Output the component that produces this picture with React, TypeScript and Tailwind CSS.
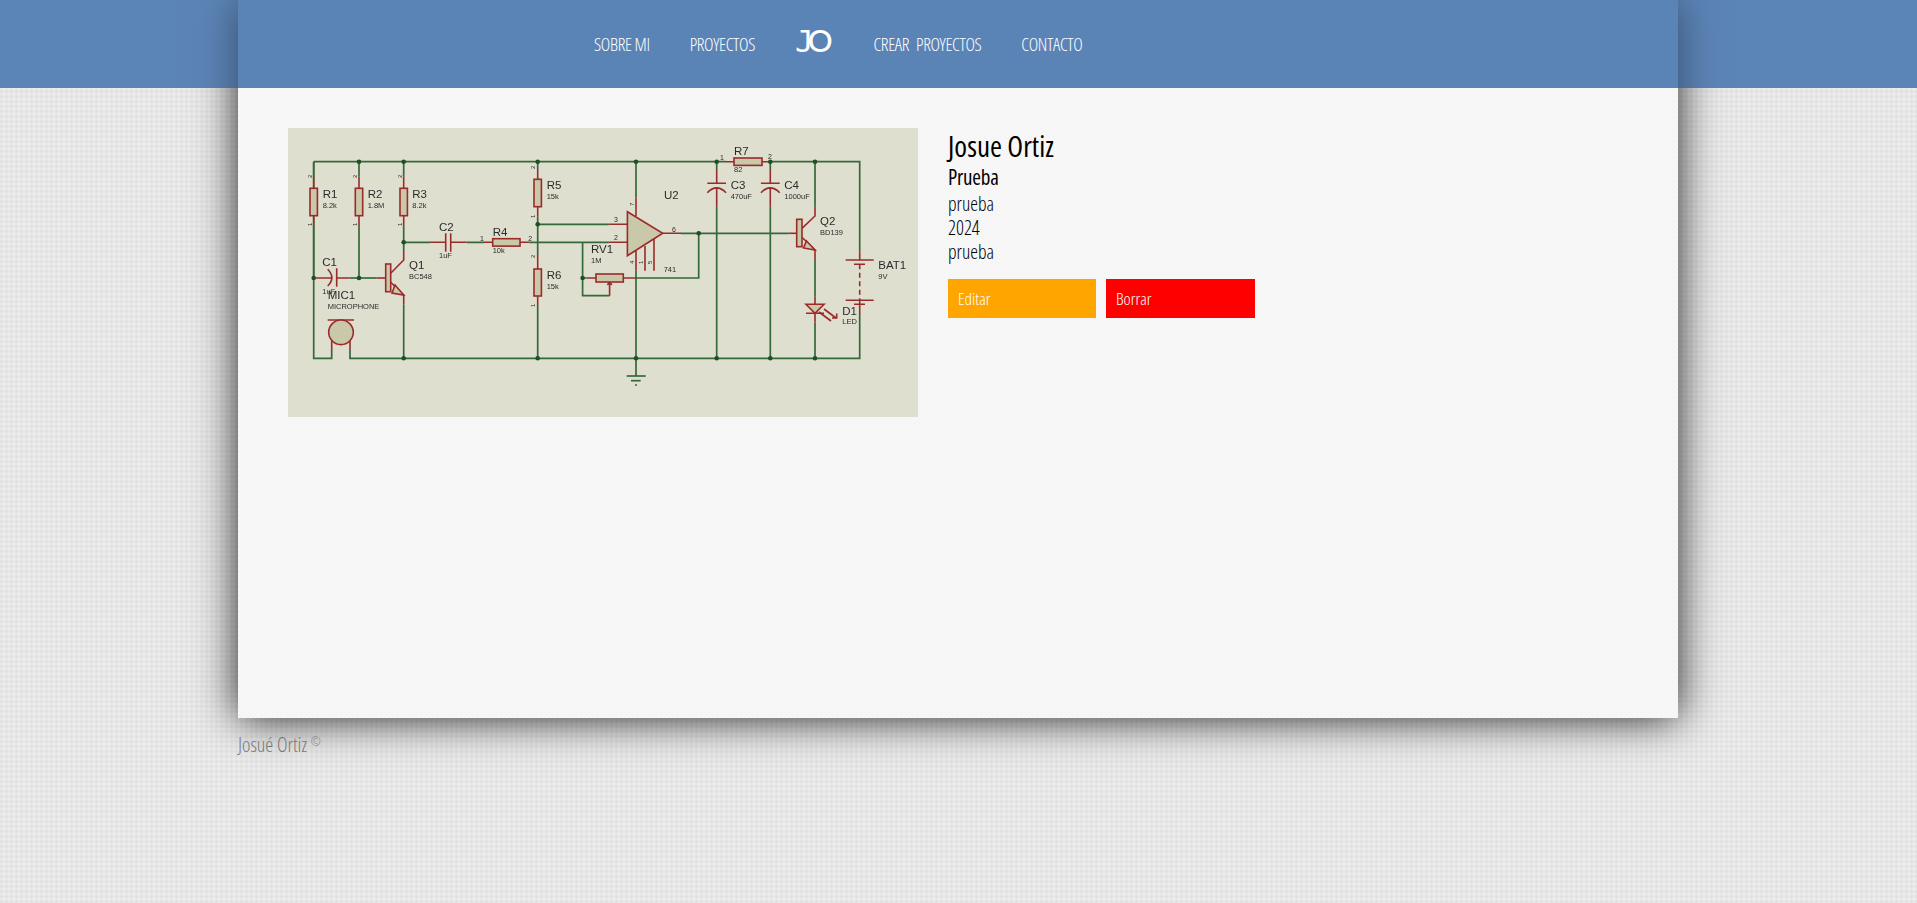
const WIRE = "#35693a";
const PART = "#9a2b2b";
const BODY = "#c9c8a8";

// green wires, each as a path
const wires = [
  "M25.7 33.7H438M482.3 33.7H571.7V123.7",
  "M25.7 33.7V230.3H43.7V222M62 222V230.3H571.7V186",
  "M25.7 33.7V48.7M25.7 97V150",
  "M71 33.7V48.7M71 97V150",
  "M115.7 33.7V48.7M115.7 97V123",
  "M115.7 176.3V230.3",
  "M115.7 114.3H142M178.7 114.3H196M241.3 114.3H320.8",
  "M249.7 33.7V42M249.7 88.7V127M249.7 178V230.3",
  "M249.7 96.3H320.8",
  "M348 33.7V69.3M348 142.7V248",
  "M393 105.3H500.3",
  "M410.7 105.3V150H348",
  "M294.6 114.3V167.7H321.6M294.6 150H298.8",
  "M428.7 33.7V42M428.7 78.7V230.3",
  "M482.3 33.7V42M482.3 78.7V230.3",
  "M527 33.7V78.7M527 132V168.7M527 194.7V230.3",
  "M61.3 150H88.7",
];

// red leads and component symbols
const leads = [
  "M28 150H44M48.7 150H61.3",
  "M88.7 150H97.7",
  "M102.7 145.3L115.7 132V123M102.7 154.3L115.7 167V176.3",
  "M142 114.3H157.7M162.7 114.3H178.7M157.7 105.3V123.7M162.7 105.3V123.7",
  "M196 114.3H204.7M232 114.3H241.3",
  "M320.8 96.3H339.4M320.8 114.3H339.4M374.7 105.3H393",
  "M348 69.3V88M348 123V142.7M357 118V142.7M366 111V142.7",
  "M298.8 150H308M335.3 150H348M321.6 167.7V154M319.4 157L321.6 154L323.8 157",
  "M428.7 42V55.3M419.3 55.3H438M419.3 64.7Q428.7 55 438 64.7M428.7 60V78.7",
  "M482.3 42V55.3M472.9 55.3H491.7M472.9 64.7Q482.3 55 491.7 64.7M482.3 60V78.7",
  "M438 33.7H446M474 33.7H482.3",
  "M500.3 105.3H508.7",
  "M514 100.3L527 88V78.7M514 109.3L527 122V132",
  "M527 168.7V176.3M518 185.3H536M527 185.3V194.7",
  "M536 181L548 190M544 190H548.7V185.5M531 184L543 193",
  "M571.7 123.7V132M557.7 132H585.7M566 136.3H577M571.7 172.3V186M557.7 172.3H585.7M566 176.3H577",
  "M39.7 192H66M43.7 212V222M62 212V222",
  "M39.7 141.3Q48 150 39.7 158M48.7 140.3V158.7",
  "M341.5 96.3H350M345.7 92V100.6M341.5 114.3H350",
];

const verticalResistors: [number, number, number][] = [
  [25.7, 60.3, 87.7],
  [71, 60.3, 87.7],
  [115.7, 60.3, 87.7],
  [249.7, 51.3, 78.7],
  [249.7, 141, 168],
];

const horizontalResistors: [number, number, number, number][] = [
  [204.7, 110.7, 27.3, 7.4],
  [446, 30, 28, 7.4],
  [308, 146, 27.3, 8],
];

const labels: [string, number, number, number?][] = [
  ["R1", 34.7, 70], ["8.2k", 34.7, 79.7, 7.5], ["R2", 79.7, 70], ["1.8M", 79.7, 79.7, 7.5],
  ["R3", 124.3, 70], ["8.2k", 124.3, 79.7, 7.5], ["C1", 34.3, 137.7], ["1uF", 34.3, 166.3, 7.5],
  ["MIC1", 39.7, 171], ["MICROPHONE", 39.7, 180.7, 7.5], ["Q1", 121, 141.3], ["BC548", 121, 151.3, 7.5],
  ["C2", 151, 102.7], ["1uF", 151, 130.3, 7.5], ["R4", 204.7, 108], ["10k", 204.7, 125.3, 7.5],
  ["R5", 258.7, 61.3], ["15k", 258.7, 71.3, 7.5], ["R6", 258.7, 151], ["15k", 258.7, 161, 7.5],
  ["RV1", 303, 124.7], ["1M", 303, 134.7, 7.5], ["U2", 376, 71.3], ["741", 375.7, 144, 7.5],
  ["R7", 446, 27], ["82", 446, 44.3, 7.5], ["C3", 442.7, 61.3], ["470uF", 442.7, 71.3, 7.5],
  ["C4", 496.3, 61.3], ["1000uF", 496.3, 71.3, 7.5], ["Q2", 532, 97], ["BD139", 532, 107, 7.5],
  ["D1", 554.3, 187], ["LED", 554.3, 196, 7.5], ["BAT1", 590.3, 141.3], ["9V", 590.3, 151.3, 7.5],
  ["1", 192, 112.7, 7], ["2", 240.3, 112.7, 7], ["3", 326, 94, 7], ["2", 326, 112, 7],
  ["6", 384, 103.7, 7], ["1", 432, 32, 7], ["2", 480, 31, 7],
];

// pin numbers printed sideways
const sidePins: [string, number, number][] = [
  ["2", 24, 50], ["1", 24, 98], ["2", 69, 50], ["1", 69, 98], ["2", 114, 50], ["1", 114, 98],
  ["2", 247, 41], ["1", 247, 90], ["2", 247, 130], ["1", 247, 179],
  ["7", 346, 78], ["4", 346, 136], ["1", 355, 136], ["5", 364, 136],
];

const dots = [
  [71, 33.7], [115.7, 33.7], [249.7, 33.7], [348, 33.7], [428.7, 33.7], [482.3, 33.7], [527, 33.7],
  [115.7, 230.3], [249.7, 230.3], [348, 230.3], [428.7, 230.3], [482.3, 230.3], [527, 230.3],
  [25.7, 150], [71, 150], [115.7, 114.3], [249.7, 96.3], [294.6, 150], [410.7, 105.3],
];

function Schematic() {
  return (
    <svg viewBox="0 0 630 289" className="block h-[289px] w-[630px] shrink-0 bg-[#dfdfcf] blur-[0.45px]">
      <g fill="none" stroke={WIRE} strokeWidth="1.7">
        {wires.map((d) => (
          <path key={d} d={d} />
        ))}
        <path d="M338.7 248H357.7" />
        <path d="M343 252.7H352.7" />
        <path d="M347 257H349" />
      </g>
      <g fill="none" stroke={PART} strokeWidth="1.6">
        {leads.map((d) => (
          <path key={d} d={d} />
        ))}
        <path d="M571.7 136.3V172.3" strokeDasharray="5 3.5" />
        <path d="M25.7 48.7V97M71 48.7V97M115.7 48.7V97M249.7 42V88.7M249.7 127V178" />
      </g>
      <g fill={BODY} stroke={PART} strokeWidth="1.6">
        {verticalResistors.map(([x, top, bottom]) => (
          <rect key={`${x}-${top}`} x={x - 3.7} y={top} width="7.4" height={bottom - top} />
        ))}
        {horizontalResistors.map(([x, y, w, h]) => (
          <rect key={`${x}-${y}`} x={x} y={y} width={w} height={h} />
        ))}
        <rect x="97.7" y="136" width="5" height="27.7" />
        <rect x="508.7" y="91.3" width="5.3" height="27.4" />
        <path d="M339.4 83.7L374.7 105.3L339.4 127.7Z" />
        <path d="M518 176.3H536L527 185.3Z" />
        <path d="M107 157L115.7 167L104 165Z" />
        <path d="M518.5 113L527 122L515.5 120Z" />
        <circle cx="53" cy="204.3" r="12.3" />
      </g>
      <g fill="#1f4f24">
        {dots.map(([x, y]) => (
          <circle key={`${x}-${y}`} cx={x} cy={y} r="2.3" />
        ))}
      </g>
      <g fontFamily="'Liberation Sans', sans-serif" fill="#2b2b2b">
        {labels.map(([text, x, y, size]) => (
          <text key={`${text}-${x}-${y}`} x={x} y={y} fontSize={size ?? 11.5}>
            {text}
          </text>
        ))}
        {sidePins.map(([text, x, y]) => (
          <text key={`${text}-${x}-${y}`} x={x} y={y} fontSize="6" transform={`rotate(-90 ${x} ${y})`}>
            {text}
          </text>
        ))}
      </g>
    </svg>
  );
}

const navClass = "font-light text-[18px] leading-[24px] text-white tracking-[-0.35px]";

export default function App() {
  return (
    <div className="relative min-h-screen bg-[linear-gradient(#5b84b6_0_88px,transparent_88px),radial-gradient(circle_at_1.5px_1.5px,#e0e0e0_1px,transparent_1.5px),radial-gradient(circle_at_4px_4px,#eeeeee_1px,transparent_1.5px)] bg-[#e8e8e8] bg-[size:100%_100%,5px_5px,5px_5px] font-['Open_Sans',sans-serif] [font-stretch:75%] text-black">
      <div className="ml-[238px] w-[1440px]">
        <div className="bg-[#f7f7f7] shadow-[0_0_40px_rgba(0,0,0,0.85)]">
          <header className="relative z-10 flex h-[88px] items-center bg-[#5b84b6] pl-[356px]">
            <nav className="flex items-center gap-[40px]">
              <a className={navClass}>SOBRE MI</a>
              <a className={navClass}>PROYECTOS</a>
              <a className="mr-[1px] flex items-baseline pb-[7px] text-[31px] leading-[34px] text-white">
                <span className="font-['DejaVu_Sans_Mono',monospace] font-normal tracking-[-6px] [font-stretch:100%]">J</span>
                <span className="font-['Lato',sans-serif] font-medium [font-stretch:100%]">O</span>
              </a>
              <a className={`${navClass} [word-spacing:4px]`}>CREAR PROYECTOS</a>
              <a className={navClass}>CONTACTO</a>
            </nav>
          </header>
          <main className="flex h-[630px] items-start gap-[30px] bg-[repeating-conic-gradient(#f5f5f5_0_25%,#f8f8f8_0_50%)] bg-[size:4px_4px] px-[50px] py-[40px]">
            <Schematic />
            <div className="flex flex-col">
              <h1 className="text-[29px] font-medium leading-[36px]">Josue Ortiz</h1>
              <h2 className="text-[21px] font-medium leading-[27px] tracking-[-0.2px]">Prueba</h2>
              <p className="mt-[1px] text-[19.5px] font-light leading-[24px]">prueba</p>
              <p className="text-[19.5px] font-light leading-[24px]">2024</p>
              <p className="text-[19.5px] font-light leading-[24px]">prueba</p>
              <div className="mt-[15px] flex gap-[10px]">
                <button className="h-[39px] w-[148px] bg-[#ffa500] px-[10px] text-left text-[17px] font-light text-white">
                  Editar
                </button>
                <button className="h-[39px] w-[149px] bg-[#ff0000] px-[10px] text-left text-[17px] font-light text-white">
                  Borrar
                </button>
              </div>
            </div>
          </main>
        </div>
        <footer className="pt-[15px] text-[20px] font-light leading-[24px] text-[#777777]">
          Josué Ortiz <sup className="text-[12px]">©</sup>
        </footer>
      </div>
      {/* full-width bar over the card shadow, which only tints it a little */}
      <div className="absolute inset-x-0 top-0 h-[88px] bg-[repeating-conic-gradient(#5a83b580_0_25%,#5e87b980_0_50%)] bg-[size:4px_4px]" />
    </div>
  );
}
